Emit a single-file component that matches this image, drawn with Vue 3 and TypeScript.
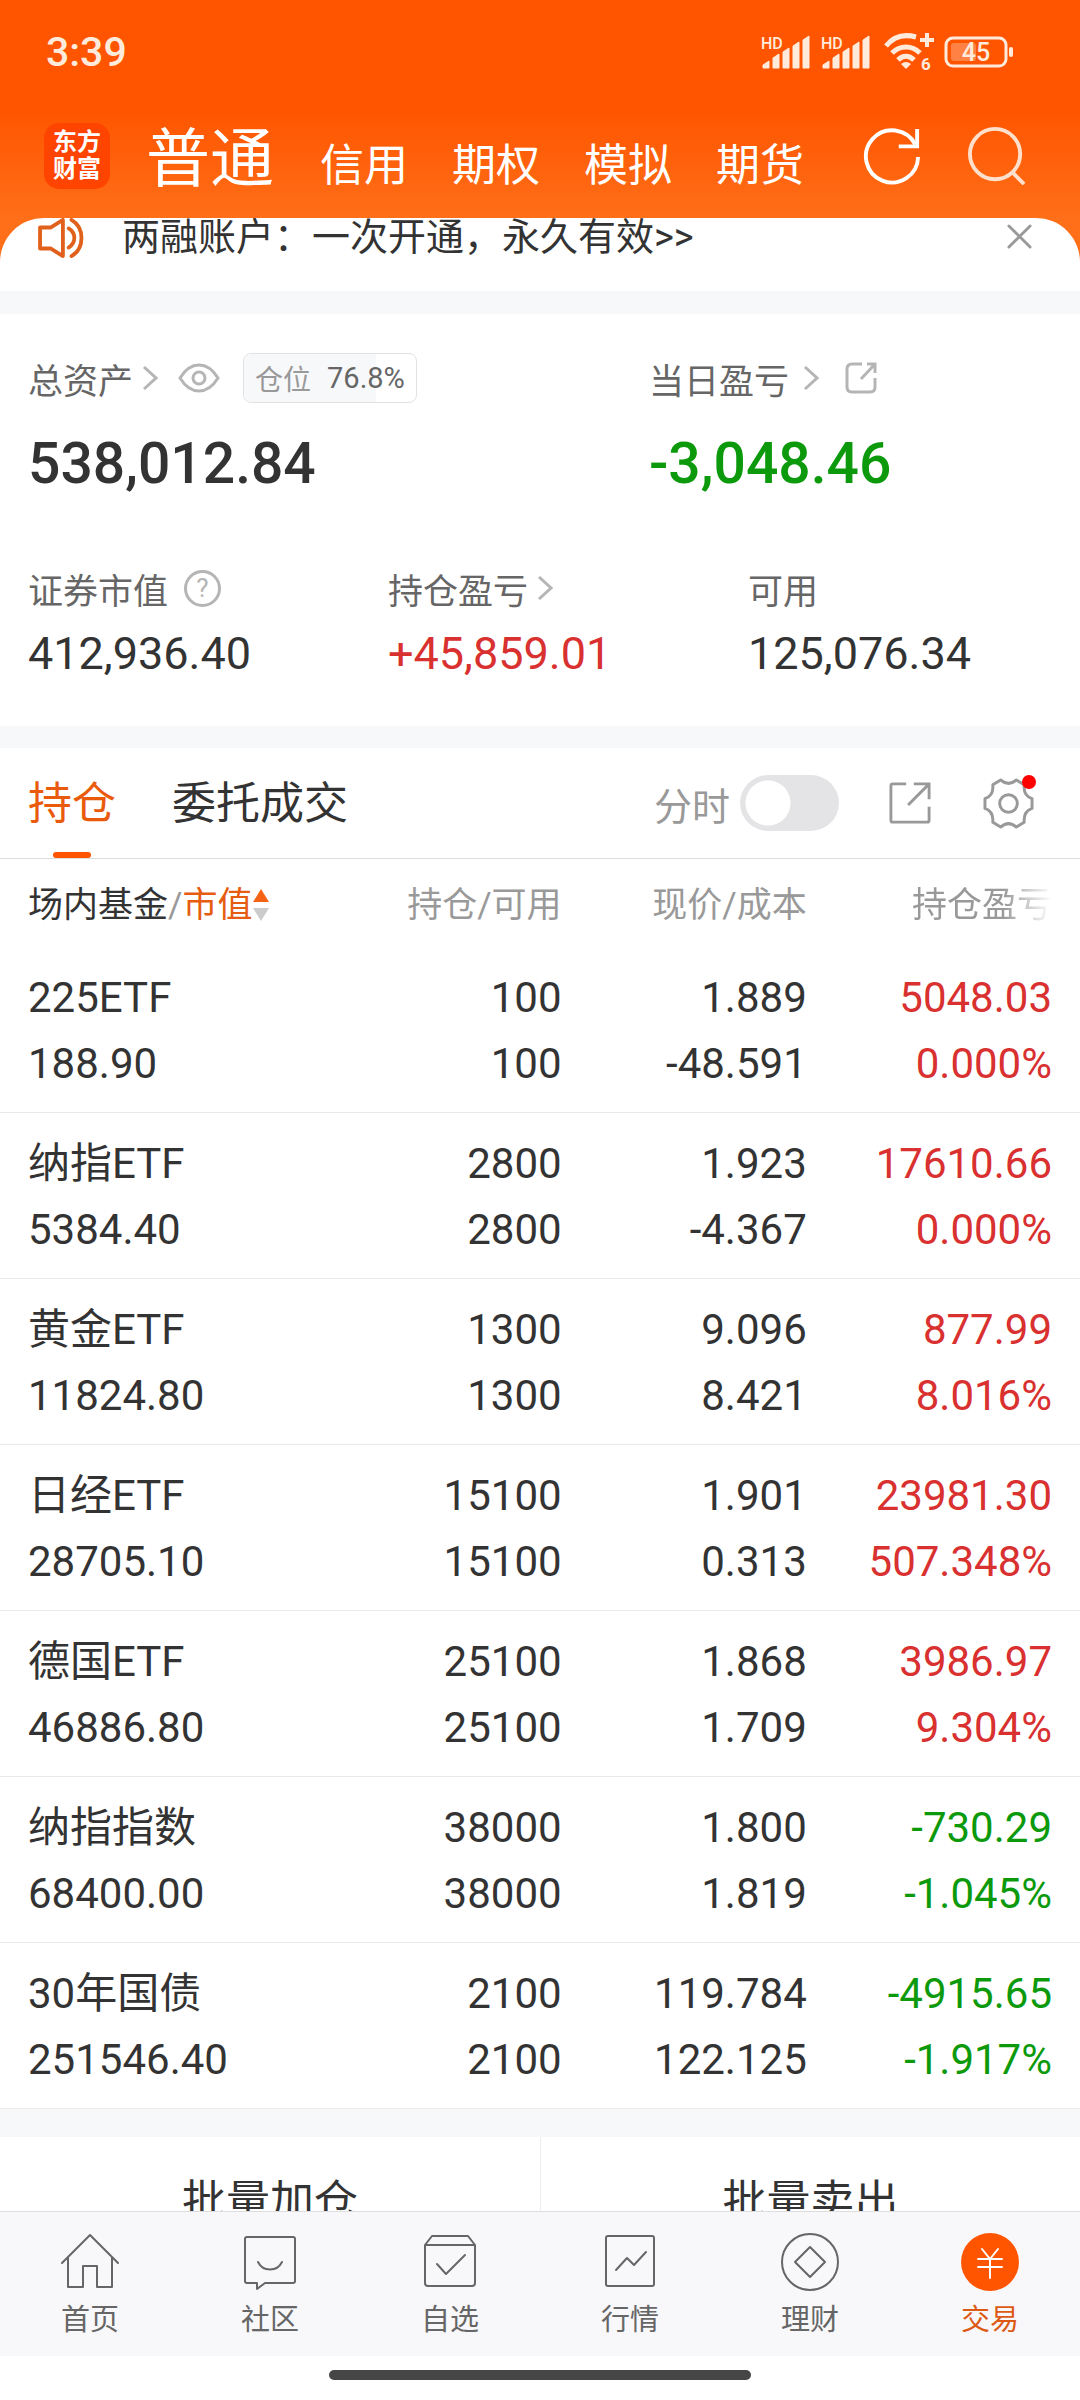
<script setup lang="ts">
import { ref } from 'vue'

interface Holding {
  name: string
  value: string
  qty: string
  avail: string
  price: string
  cost: string
  profit: string
  rate: string
}

const holdings: Holding[] = [
  { name: '225ETF', value: '188.90', qty: '100', avail: '100', price: '1.889', cost: '-48.591', profit: '5048.03', rate: '0.000%' },
  { name: '纳指ETF', value: '5384.40', qty: '2800', avail: '2800', price: '1.923', cost: '-4.367', profit: '17610.66', rate: '0.000%' },
  { name: '黄金ETF', value: '11824.80', qty: '1300', avail: '1300', price: '9.096', cost: '8.421', profit: '877.99', rate: '8.016%' },
  { name: '日经ETF', value: '28705.10', qty: '15100', avail: '15100', price: '1.901', cost: '0.313', profit: '23981.30', rate: '507.348%' },
  { name: '德国ETF', value: '46886.80', qty: '25100', avail: '25100', price: '1.868', cost: '1.709', profit: '3986.97', rate: '9.304%' },
  { name: '纳指指数', value: '68400.00', qty: '38000', avail: '38000', price: '1.800', cost: '1.819', profit: '-730.29', rate: '-1.045%' },
  { name: '30年国债', value: '251546.40', qty: '2100', avail: '2100', price: '119.784', cost: '122.125', profit: '-4915.65', rate: '-1.917%' },
]

const accounts = ['普通', '信用', '期权', '模拟', '期货']
const account = ref('普通')
const intraday = ref(false)
const position = 76.8

const tone = (v: string): string => (v.startsWith('-') ? 'down' : 'up')
</script>

<template>
  <div class="app">
    <header class="top">
      <div class="status">
        <span class="clock">3:39</span>
        <div class="indicators">
          <svg v-for="n in 2" :key="n" class="signal" viewBox="0 -6 50 48" aria-hidden="true">
            <text x="0" y="15" font-size="16" font-weight="500">HD</text>
            <path d="M2 34v-3l6-4v7zM12 34V24l6-4v14zM22 34V18l6-4v20zM32 34V12l6-4v26zM42 34V6l6-4v32z" fill="currentColor" stroke="currentColor" stroke-width="1" stroke-linejoin="round" />
          </svg>
          <svg class="wifi" viewBox="0 -4 50 48" aria-hidden="true">
            <g fill="none" stroke="currentColor" stroke-width="5">
              <path d="M2 14C10 4 21 2 32 5" />
              <path d="M8 21c8-8 20-8 28 0" />
              <path d="M14 28c5-5 11-5 16 0" />
            </g>
            <path d="M17 32q5-4 10 0l-5 5z" fill="currentColor" />
            <path d="M43 1v14M36 8h14" stroke="currentColor" stroke-width="4" />
            <text x="37" y="38" font-size="17" font-weight="700">6</text>
          </svg>
          <svg class="battery" viewBox="0 0 70 32" aria-hidden="true">
            <rect x="2" y="2" width="60" height="28" rx="7" fill="none" stroke="currentColor" stroke-width="3" />
            <rect x="7" y="7" width="25" height="18" rx="3" fill="#ff8244" />
            <path d="M67 13v6" stroke="currentColor" stroke-width="4" stroke-linecap="round" />
            <text x="32" y="25" font-size="25" font-weight="500" text-anchor="middle">45</text>
          </svg>
        </div>
      </div>
      <div class="bar">
        <div class="logo"><span>东方</span><span>财富</span></div>
        <nav class="accounts">
          <button v-for="a in accounts" :key="a" :class="{ on: a === account }" @click="account = a">{{ a }}</button>
        </nav>
        <div class="tools">
          <button aria-label="刷新">
            <svg viewBox="0 0 60 60" fill="none" stroke="#fff" stroke-width="4">
              <path d="M57 31A27 27 0 1 1 54 18" />
              <path d="M56 2v18H37" />
            </svg>
          </button>
          <button aria-label="搜索">
            <svg viewBox="0 0 60 60" fill="none" stroke="#ffe0cc" stroke-width="4">
              <circle cx="28" cy="28" r="26" />
              <path d="M45 46l13 13" />
            </svg>
          </button>
        </div>
      </div>
    </header>

    <main class="content">
      <div class="notice-wrap">
        <div class="notice">
          <svg class="horn" viewBox="0 0 48 42" fill="none" stroke="#e0601c" stroke-width="4" stroke-linejoin="round" stroke-linecap="round" aria-hidden="true">
            <path d="M2 10h11L26 2v38L13 32H2z" />
            <path d="M32 11c8 5 8 15 0 20" />
            <path d="M35 2c14 8 14 30 0 38" />
          </svg>
          <a href="#">两融账户：一次开通，永久有效&gt;&gt;</a>
          <button class="close" aria-label="关闭">
            <svg viewBox="0 0 26 26" stroke="#999" stroke-width="3" stroke-linecap="round"><path d="M2 2l22 22M24 2L2 24" /></svg>
          </button>
        </div>
      </div>

      <section class="summary">
        <div class="row major">
          <div class="stat">
            <div class="label">
              <a href="#">总资产<svg class="chev" viewBox="0 0 16 26"><path d="M2 2l12 11L2 24" /></svg></a>
              <button class="eye" aria-label="显示">
                <svg viewBox="0 0 42 30" fill="none" stroke="#b5b5b5" stroke-width="3"><path d="M2 15Q10 2 21 2T40 15Q32 28 21 28T2 15z" /><circle cx="21" cy="15" r="6" /></svg>
              </button>
              <span class="badge">
                <i :style="{ width: position + '%' }"></i>
                <span>仓位</span><b>{{ position }}%</b>
              </span>
            </div>
            <div class="num">538,012.84</div>
          </div>
          <div class="stat">
            <div class="label">
              <a href="#">当日盈亏<svg class="chev far" viewBox="0 0 16 26"><path d="M2 2l12 11L2 24" /></svg></a>
              <button class="share" aria-label="分享">
                <svg viewBox="0 0 32 32" fill="none" stroke="#b5b5b5" stroke-width="3"><path d="M17 2H7Q2 2 2 7v18q0 5 5 5h18q5 0 5-5V16" /><path d="M22 2h8v9M30 2L16 17" /></svg>
              </button>
            </div>
            <div class="num down">-3,048.46</div>
          </div>
        </div>
        <div class="row minor">
          <div class="stat">
            <div class="label">
              证券市值
              <button class="help" aria-label="说明">?</button>
            </div>
            <div class="num">412,936.40</div>
          </div>
          <div class="stat">
            <div class="label"><a href="#">持仓盈亏<svg class="chev" viewBox="0 0 16 26"><path d="M2 2l12 11L2 24" /></svg></a></div>
            <div class="num up">+45,859.01</div>
          </div>
          <div class="stat">
            <div class="label">可用</div>
            <div class="num">125,076.34</div>
          </div>
        </div>
      </section>

      <section class="panel">
        <div class="tabs">
          <button class="tab on">持仓</button>
          <button class="tab">委托成交</button>
          <label class="toggle">分时<input v-model="intraday" type="checkbox" role="switch" /></label>
          <button class="export" aria-label="导出">
            <svg viewBox="0 0 44 44" fill="none" stroke="#999" stroke-width="3"><path d="M18 2H4q-2 0-2 2v36q0 2 2 2h36q2 0 2-2V26" /><path d="M26 2h16v16M41 3L20 24" /></svg>
          </button>
          <button class="gear" aria-label="设置">
            <svg viewBox="0 0 52 52" fill="none" stroke="#999" stroke-width="3" stroke-linejoin="round">
              <path d="M18 2Q26 9 34 2L42 7Q41 18 50 21V31Q41 34 42 45L34 50Q26 43 18 50L10 45Q11 34 2 31V21Q11 18 10 7z" />
              <circle cx="26" cy="26" r="9" />
            </svg>
            <span class="dot"></span>
          </button>
        </div>

        <table>
          <colgroup><col class="c1" /><col class="c2" /><col class="c3" /><col /></colgroup>
          <thead>
            <tr>
              <th>
                <span class="dark">场内基金</span>/<span class="accent">市值</span><svg class="sort" viewBox="0 0 16 32"><path d="M8 0l8 13H0z" fill="#f56414" /><path d="M8 32l8-13H0z" fill="#ccc" /></svg>
              </th>
              <th>持仓/可用</th>
              <th>现价/成本</th>
              <th><span class="fade">持仓盈亏</span></th>
            </tr>
          </thead>
          <tbody>
            <tr v-for="h in holdings" :key="h.name">
              <td><div>{{ h.name }}</div><div>{{ h.value }}</div></td>
              <td><div>{{ h.qty }}</div><div>{{ h.avail }}</div></td>
              <td><div>{{ h.price }}</div><div>{{ h.cost }}</div></td>
              <td :class="tone(h.profit)"><div>{{ h.profit }}</div><div>{{ h.rate }}</div></td>
            </tr>
          </tbody>
        </table>
      </section>

      <div class="batch">
        <button>批量加仓</button>
        <button>批量卖出</button>
      </div>
    </main>

    <nav class="dock">
      <a href="#">
        <svg viewBox="0 0 60 60"><path d="M2 31L30 3l28 28M8 26v29h15V34h14v21h15V26" /></svg>
        首页
      </a>
      <a href="#">
        <svg viewBox="0 0 60 60"><path d="M7 5h46q2 0 2 2v42q0 2-2 2H25l-8 6v-6H7q-2 0-2-2V7q0-2 2-2z" /><path d="M18 30c5 10 19 10 24 0" /></svg>
        社区
      </a>
      <a href="#">
        <svg viewBox="0 0 60 60"><path d="M5 13l7-9h36l7 9v38q0 3-3 3H8q-3 0-3-3zM5 13h50M17 32l9 10 19-19" /></svg>
        自选
      </a>
      <a href="#">
        <svg viewBox="0 0 60 60"><path d="M8 4h44q2 0 2 2v46q0 2-2 2H8q-2 0-2-2V6q0-2 2-2zM16 38l11-12 7 7 12-13" /></svg>
        行情
      </a>
      <a href="#">
        <svg viewBox="0 0 60 60"><circle cx="30" cy="30" r="28" /><path d="M30 15l15 15-15 15-15-15z" /></svg>
        理财
      </a>
      <a href="#" class="on">
        <svg viewBox="0 0 60 60"><circle cx="30" cy="30" r="29" fill="#f50" stroke="none" /><path d="M22 17l8 10 8-10M30 27v19M18 27h24M18 35h24" stroke="#fff" /></svg>
        交易
      </a>
    </nav>
    <div class="home"><span></span></div>
  </div>
</template>

<style>
body {
  margin: 0;
  background: #fff;
}
</style>

<style scoped>
.app {
  display: flex;
  flex-direction: column;
  height: 100vh;
  overflow: hidden;
  font-family: Roboto, "Noto Sans CJK SC", sans-serif;
  font-size: 35px;
  color: #333;
}
button {
  padding: 0;
  border: 0;
  background: none;
  font: inherit;
  color: inherit;
}
a {
  color: inherit;
  text-decoration: none;
}
svg {
  display: block;
  flex: none;
}
.up { color: #d93030; }
.down { color: #0c9a0c; }

/* header */
.top {
  flex: none;
  background: linear-gradient(#f50 50%, #ff6e18);
  color: #fff;
}
.status {
  display: flex;
  align-items: center;
  justify-content: space-between;
  height: 104px;
  padding: 0 66px 0 46px;
  color: #ffebdc;
}
.clock {
  font-size: 41px;
  font-weight: 500;
}
.indicators {
  display: flex;
  align-items: center;
  gap: 10px;
}
.indicators text { fill: currentColor; }
.signal { width: 50px; height: 48px; }
.wifi { width: 50px; height: 48px; margin-left: 3px; }
.battery { width: 70px; height: 32px; }
.bar {
  display: flex;
  align-items: center;
  height: 114px;
  padding: 0 54px 10px 44px;
  box-sizing: border-box;
}
.logo {
  display: flex;
  flex-direction: column;
  align-items: center;
  justify-content: center;
  width: 66px;
  height: 66px;
  border-radius: 15px;
  background: #ff4400;
  font-size: 24px;
  font-weight: 700;
  line-height: 27px;
}
.accounts {
  display: flex;
  align-items: baseline;
  gap: 44px;
  margin-left: 36px;
  padding-top: 14px;
  font-size: 44px;
  line-height: 84px;
}
.accounts .on {
  margin-right: 2px;
  font-size: 64px;
}
.tools {
  display: flex;
  gap: 47px;
  margin-left: auto;
}
.tools svg { width: 58px; height: 58px; }

/* scrolled content */
.content {
  flex: 1;
  min-height: 0;
  overflow: hidden;
  background: #f7f8fa;
}
.notice-wrap { background: #ff6e18; }
.notice {
  display: flex;
  align-items: flex-start;
  height: 73px;
  padding: 0 48px 0 37px;
  box-sizing: border-box;
  overflow: hidden;
  border-radius: 44px 44px 0 0;
  background: #fff;
  font-size: 38px;
  line-height: 38px;
}
.horn { width: 48px; height: 40px; margin-right: 37px; }
.close { margin: 6px 0 0 auto; }
.close svg { width: 25px; height: 25px; }

.summary {
  margin: 23px 0 22px;
  padding: 36px 0 34px;
  background: #fff;
}
.row { display: grid; }
.major { grid-template-columns: 23fr 17fr; }
.minor {
  grid-template-columns: repeat(3, 1fr);
  margin-top: 38px;
}
.stat { padding-left: 28px; }
.label {
  display: flex;
  align-items: center;
  height: 56px;
  color: #666;
}
.label a {
  display: flex;
  align-items: center;
}
.chev {
  width: 16px;
  height: 26px;
  margin-left: 9px;
  fill: none;
  stroke: #b5b5b5;
  stroke-width: 3;
}
.far { margin-left: 14px; }
.eye { margin-left: 20px; }
.eye svg { width: 42px; height: 30px; }
.share { margin-left: 26px; }
.share svg { width: 32px; height: 32px; }
.badge {
  position: relative;
  display: flex;
  align-items: center;
  gap: 16px;
  height: 50px;
  margin-left: 23px;
  padding: 0 11px;
  box-sizing: border-box;
  border: 1px solid #e2e2e4;
  border-radius: 8px;
  overflow: hidden;
  font-size: 28px;
  color: #999;
}
.badge i {
  position: absolute;
  inset: 0 auto 0 0;
  background: #f7f8fa;
}
.badge span,
.badge b { position: relative; }
.badge b {
  font-size: 29px;
  font-weight: 400;
  color: #666;
}
.num {
  font-size: 45px;
  line-height: 76px;
}
.major .num {
  font-size: 57px;
  font-weight: 500;
  line-height: 116px;
}
.help {
  width: 37px;
  height: 37px;
  margin-left: 16px;
  border: 3px solid #b5b5b5;
  border-radius: 50%;
  box-sizing: border-box;
  font-size: 26px;
  line-height: 30px;
  color: #b5b5b5;
}

/* positions */
.panel { background: #fff; }
.tabs {
  display: flex;
  align-items: center;
  height: 111px;
  padding: 0 46px 0 28px;
  box-sizing: border-box;
  border-bottom: 1px solid #ddd;
}
.tab {
  position: relative;
  height: 110px;
  margin-right: 56px;
  padding-bottom: 6px;
  font-size: 44px;
}
.tab.on { color: #ea5a0c; }
.tab.on::after {
  content: "";
  position: absolute;
  bottom: 0;
  left: 50%;
  width: 38px;
  height: 6px;
  margin-left: -19px;
  border-radius: 3px;
  background: #f50;
}
.toggle {
  display: flex;
  align-items: center;
  gap: 10px;
  margin-left: auto;
  font-size: 38px;
  color: #999;
}
.toggle input {
  appearance: none;
  width: 99px;
  height: 56px;
  margin: 0;
  border-radius: 28px;
  background: radial-gradient(circle at 28px 28px, #fff 22px, #e4e4e6 23px);
}
.toggle input:checked {
  background: radial-gradient(circle at 71px 28px, #fff 22px, #f50 23px);
}
.export { margin: 0 52px 0 50px; }
.export svg { width: 42px; height: 42px; }
.gear { position: relative; }
.gear svg { width: 51px; height: 51px; }
.dot {
  position: absolute;
  top: -3px;
  right: -2px;
  width: 14px;
  height: 14px;
  border-radius: 50%;
  background: #f00;
}

table {
  width: 100%;
  table-layout: fixed;
  border-collapse: collapse;
  font-size: 42px;
}
.c1 { width: 30%; }
.c2 { width: 22%; }
.c3 { width: 22.7%; }
th {
  height: 84px;
  padding: 0 0 4px;
  font-size: 35px;
  font-weight: 400;
  text-align: right;
  color: #999;
  white-space: nowrap;
}
th:first-child,
td:first-child {
  padding-left: 28px;
  text-align: left;
}
th:last-child,
td:last-child { padding-right: 28px; }
.dark { color: #333; }
.accent { color: #e65c10; }
.sort {
  display: inline-block;
  width: 16px;
  height: 32px;
  margin-left: 1px;
  vertical-align: -4px;
}
.fade { mask-image: linear-gradient(90deg, #000 65%, transparent); }
td {
  padding: 18px 0 15px;
  border-bottom: 1px solid #eaeaea;
  line-height: 66px;
  text-align: right;
  white-space: nowrap;
}

.batch {
  display: grid;
  grid-template-columns: 1fr 1fr;
  margin-top: 28px;
  background: #fff;
}
.batch button {
  height: 122px;
  font-size: 44px;
}
.batch button + button { border-left: 1px solid #eee; }

/* bottom navigation */
.dock {
  flex: none;
  display: grid;
  grid-template-columns: repeat(6, 1fr);
  height: 145px;
  box-sizing: border-box;
  border-top: 1px solid #ddd;
  background: #f8f8fa;
}
.dock a {
  display: flex;
  flex-direction: column;
  align-items: center;
  padding-top: 20px;
  font-size: 29px;
  line-height: 48px;
  color: #666;
}
.dock .on { color: #dc5a14; }
.dock svg {
  width: 60px;
  height: 60px;
  margin-bottom: 4px;
  fill: none;
  stroke: #666;
  stroke-width: 2;
  stroke-linecap: round;
  stroke-linejoin: round;
}
.home {
  flex: none;
  display: flex;
  justify-content: center;
  height: 44px;
  padding-top: 14px;
  box-sizing: border-box;
}
.home span {
  width: 39%;
  height: 10px;
  border-radius: 5px;
  background: #464646;
}
</style>
